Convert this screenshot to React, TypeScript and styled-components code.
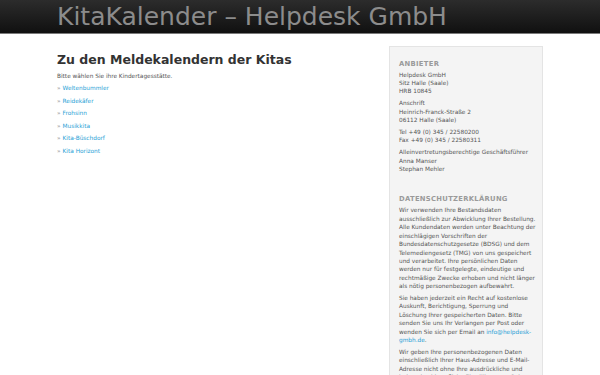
import styled, { createGlobalStyle } from "styled-components";

const GlobalStyle = createGlobalStyle`
  body {
    margin: 0;
    background: #fff;
    font-family: "DejaVu Sans", Verdana, sans-serif;
    color: #555;
  }
`;

const Header = styled.header`
  height: 33px;
  background: linear-gradient(to bottom, #2c2c2c, #101010);
  border-bottom: 1px solid #7a7a7a;
`;

const Brand = styled.div`
  width: 486px;
  margin: 0 auto;
  font-size: 25px;
  line-height: 34px;
  color: #8c8c8c;
  white-space: nowrap;
`;

const Wrap = styled.div`
  width: 486px;
  margin: 0 auto;
  display: grid;
  grid-template-columns: 1fr 154px;
  gap: 32px;
  padding-top: 12px;
`;

const Main = styled.main`
  padding-top: 6px;
`;

const Title = styled.h1`
  margin: 0 0 5px;
  font-size: 12.5px;
  line-height: 15px;
  font-weight: bold;
  color: #333;
`;

const Intro = styled.p`
  margin: 0 0 1px;
  font-size: 5.8px;
  line-height: 9px;
`;

const List = styled.ul`
  margin: 0;
  padding: 0;
  list-style: none;
`;

const Item = styled.li`
  font-size: 5.8px;
  line-height: 12.5px;
  color: #999;

  &::before {
    content: "»";
    margin-right: 2px;
  }

  a {
    color: #2a9fd6;
    text-decoration: none;
  }
`;

const Aside = styled.aside`
  background: #f4f4f4;
  border: 1px solid #e4e4e4;
  padding: 12.5px 5px 0 9px;
  min-height: 330px;
`;

const AsideTitle = styled.h3`
  margin: 0 0 2px;
  font-size: 6.8px;
  line-height: 9px;
  font-weight: bold;
  letter-spacing: 0.3px;
  color: #9a9a9a;
`;

const Para = styled.p`
  margin: 0 0 3.5px;
  font-size: 5.8px;
  line-height: 8.4px;
  color: #555;

  a {
    color: #2a9fd6;
    text-decoration: none;
  }
`;

const Section = styled.section<{ $gap?: number }>`
  margin-bottom: ${({ $gap }) => $gap ?? 0}px;
`;

const kitas = [
  "Weltenbummler",
  "Reidekäfer",
  "Frohsinn",
  "Musikkita",
  "Kita-Büschdorf",
  "Kita Horizont",
];

export default function App() {
  return (
    <>
      <GlobalStyle />
      <Header>
        <Brand>KitaKalender – Helpdesk GmbH</Brand>
      </Header>
      <Wrap>
        <Main>
          <Title>Zu den Meldekalendern der Kitas</Title>
          <Intro>Bitte wählen Sie ihre Kindertagesstätte.</Intro>
          <List>
            {kitas.map((k) => (
              <Item key={k}>
                <a href="#">{k}</a>
              </Item>
            ))}
          </List>
        </Main>
        <Aside>
          <Section $gap={22}>
            <AsideTitle>ANBIETER</AsideTitle>
            <Para>
              Helpdesk GmbH
              <br />
              Sitz Halle (Saale)
              <br />
              HRB 10845
            </Para>
            <Para>
              Anschrift
              <br />
              Heinrich-Franck-Straße 2
              <br />
              06112 Halle (Saale)
            </Para>
            <Para>
              Tel +49 (0) 345 / 22580200
              <br />
              Fax +49 (0) 345 / 22580311
            </Para>
            <Para>
              Alleinvertretungsberechtige Geschäftsführer
              <br />
              Anna Manser
              <br />
              Stephan Mehler
            </Para>
          </Section>
          <Section>
            <AsideTitle>DATENSCHUTZERKLÄRUNG</AsideTitle>
            <Para>
              Wir verwenden Ihre Bestandsdaten ausschließlich zur Abwicklung
              Ihrer Bestellung. Alle Kundendaten werden unter Beachtung der
              einschlägigen Vorschriften der Bundesdatenschutzgesetze (BDSG)
              und dem Telemediengesetz (TMG) von uns gespeichert und
              verarbeitet. Ihre persönlichen Daten werden nur für festgelegte,
              eindeutige und rechtmäßige Zwecke erhoben und nicht länger als
              nötig personenbezogen aufbewahrt.
            </Para>
            <Para>
              Sie haben jederzeit ein Recht auf kostenlose Auskunft,
              Berichtigung, Sperrung und Löschung Ihrer gespeicherten Daten.
              Bitte senden Sie uns Ihr Verlangen per Post oder wenden Sie sich
              per Email an <a href="#">info@helpdesk-gmbh.de</a>.
            </Para>
            <Para>
              Wir geben Ihre personenbezogenen Daten einschließlich Ihrer
              Haus-Adresse und E-Mail-Adresse nicht ohne Ihre ausdrückliche und
              jederzeit widerrufliche Einwilligung an Dritte weiter.
            </Para>
          </Section>
        </Aside>
      </Wrap>
    </>
  );
}
